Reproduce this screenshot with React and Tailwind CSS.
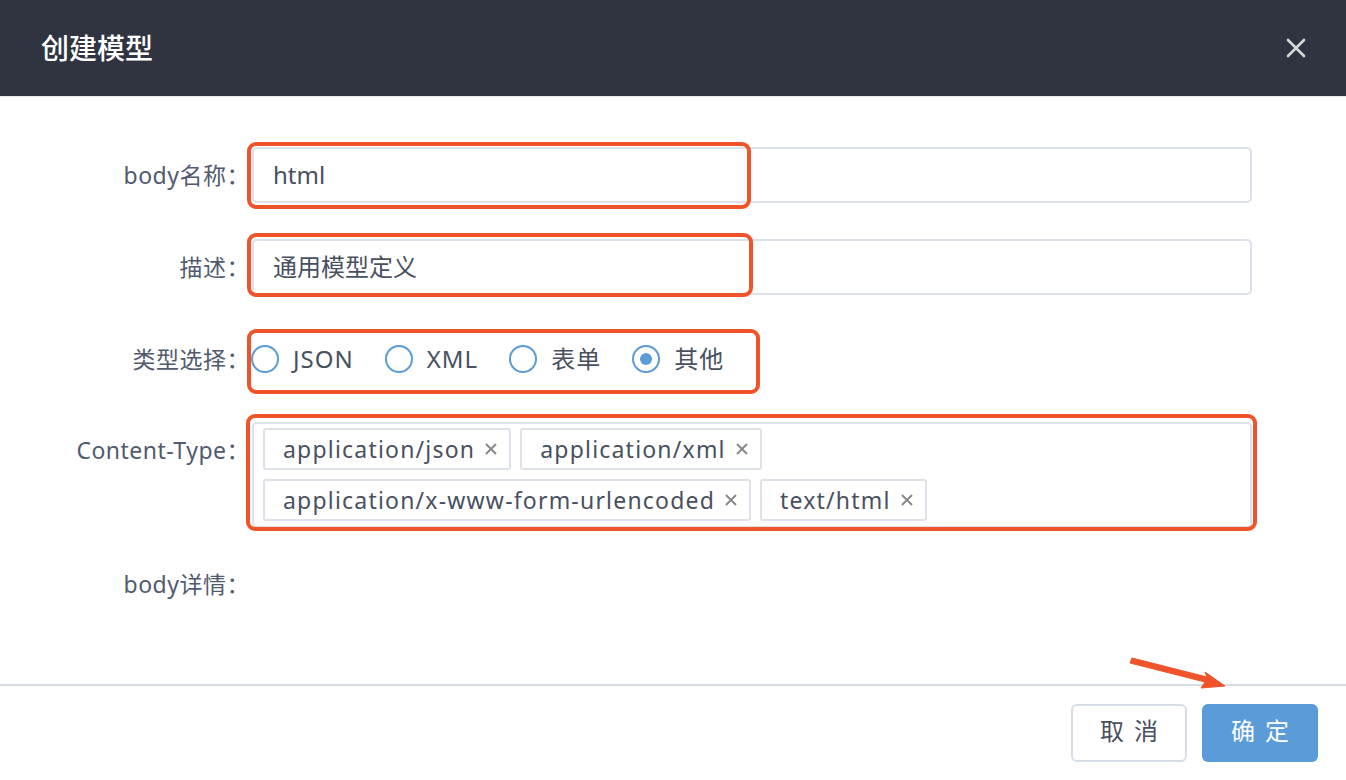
import React, { useState } from 'react';

const font = { fontFamily: '"Noto Sans", "Noto Sans CJK SC", sans-serif' };

// Caja roja de anotación sobre el campo
const Highlight = ({ className }) => (
  <div className={`pointer-events-none absolute rounded-[9px] border-[4px] border-[#f0522a] ${className}`} />
);

const Label = ({ children, className = '' }) => (
  <div className={`w-[250px] shrink-0 text-right text-[23px] leading-none tracking-[0.5px] text-[#515a6e] ${className}`}>
    {children}
  </div>
);

const Radio = ({ label, checked, onClick }) => (
  <button onClick={onClick} className="flex items-center gap-[14px] cursor-pointer">
    <span className="flex h-[28px] w-[28px] items-center justify-center rounded-full border-2 border-[#5a9bd8] bg-white">
      {checked && <span className="h-[12px] w-[12px] rounded-full bg-[#5a9bd8]" />}
    </span>
    <span className="text-[24px] leading-none tracking-[1px] text-[#495060]">{label}</span>
  </button>
);

const Tag = ({ text, onRemove }) => (
  <div className="flex h-[42px] items-center gap-[9px] rounded-[3px] border-2 border-[#dde1ea] bg-white pl-[18px] pr-[11px]">
    <span className="text-[23px] leading-none tracking-[1.2px] text-[#495060]">{text}</span>
    <button onClick={onRemove} className="text-[#888] cursor-pointer">
      <svg width="14" height="14" viewBox="0 0 14 14" stroke="currentColor" strokeWidth="2">
        <path d="M2 2l10 10M12 2L2 12" />
      </svg>
    </button>
  </div>
);

const App = () => {
  const [tipo, setTipo] = useState('其他');
  const [tags, setTags] = useState([
    'application/json',
    'application/xml',
    'application/x-www-form-urlencoded',
    'text/html',
  ]);

  return (
    <div style={font} className="relative flex h-[780px] w-[1346px] flex-col overflow-hidden bg-white">
      {/* Cabecera */}
      <div className="flex h-[97px] shrink-0 items-center justify-between border-b border-[#e4e7ee] bg-[#2f3440] pl-[41px] pr-[40px]">
        <div className="text-[28px] font-medium leading-none text-white">创建模型</div>
        <svg width="20" height="20" viewBox="0 0 20 20" stroke="#d8d8d8" strokeWidth="2.6" strokeLinecap="round">
          <path d="M2 2l16 16M18 2L2 18" />
        </svg>
      </div>

      {/* Formulario */}
      <div className="flex flex-1 flex-col pt-[50px]">
        <div className="flex h-[56px] items-center">
          <Label>body名称：</Label>
          <div className="relative ml-[2px] w-[1000px]">
            <div className="flex h-[56px] items-center rounded-[5px] border-2 border-[#dde1ea] px-[19px] text-[24px] text-[#495060]">
              html
            </div>
            <Highlight className="-left-[5px] -top-[5px] h-[67px] w-[504px]" />
          </div>
        </div>

        <div className="mt-[36px] flex h-[56px] items-center">
          <Label>描述：</Label>
          <div className="relative ml-[2px] w-[1000px]">
            <div className="flex h-[56px] items-center rounded-[5px] border-2 border-[#dde1ea] px-[19px] text-[24px] text-[#495060]">
              通用模型定义
            </div>
            <Highlight className="-left-[5px] -top-[6px] h-[64px] w-[506px]" />
          </div>
        </div>

        <div className="mt-[36px] flex h-[56px] items-center">
          <Label>类型选择：</Label>
          <div className="relative ml-[1px] flex items-center gap-[31px]">
            {['JSON', 'XML', '表单', '其他'].map((t) => (
              <Radio key={t} label={t} checked={tipo === t} onClick={() => setTipo(t)} />
            ))}
            <Highlight className="-left-[4px] -top-[16px] h-[65px] w-[513px]" />
          </div>
        </div>

        <div className="mt-[35px] flex">
          <Label className="pt-[17px]">Content-Type：</Label>
          <div className="relative ml-[2px] w-[1000px]">
            <div className="flex min-h-[106px] flex-wrap content-start gap-x-[9px] gap-y-[9px] rounded-[5px] border-2 border-[#dde1ea] px-[9px] py-[4px]">
              {tags.map((t) => (
                <Tag key={t} text={t} onRemove={() => setTags(tags.filter((x) => x !== t))} />
              ))}
            </div>
            <Highlight className="-left-[6px] -top-[8px] h-[117px] w-[1011px]" />
          </div>
        </div>

        <div className="mt-[45px] flex">
          <Label>body详情：</Label>
        </div>
      </div>

      {/* Pie */}
      <div className="flex h-[96px] shrink-0 items-center justify-end gap-[15px] border-t-2 border-[#d7dbe4] pr-[28px]">
        <button className="h-[58px] w-[116px] rounded-[6px] border-2 border-[#d7dde8] bg-white pb-[4px] text-[24px] tracking-[10px] text-[#495060]">
          <span className="pl-[10px]">取消</span>
        </button>
        <button className="h-[58px] w-[116px] rounded-[6px] bg-[#5a9bd8] pb-[4px] text-[24px] tracking-[10px] text-white">
          <span className="pl-[10px]">确定</span>
        </button>
      </div>

      {/* Flecha de anotación */}
      <svg className="pointer-events-none absolute left-[1125px] top-[650px]" width="110" height="45" viewBox="0 0 110 45">
        <path d="M7 8 L82 27 L80 22 L100 36 L76 38 L80 32 L5 13 Z" fill="#f0522a" stroke="#f0522a" strokeWidth="1" strokeLinejoin="round" />
      </svg>
    </div>
  );
};

export default App;
